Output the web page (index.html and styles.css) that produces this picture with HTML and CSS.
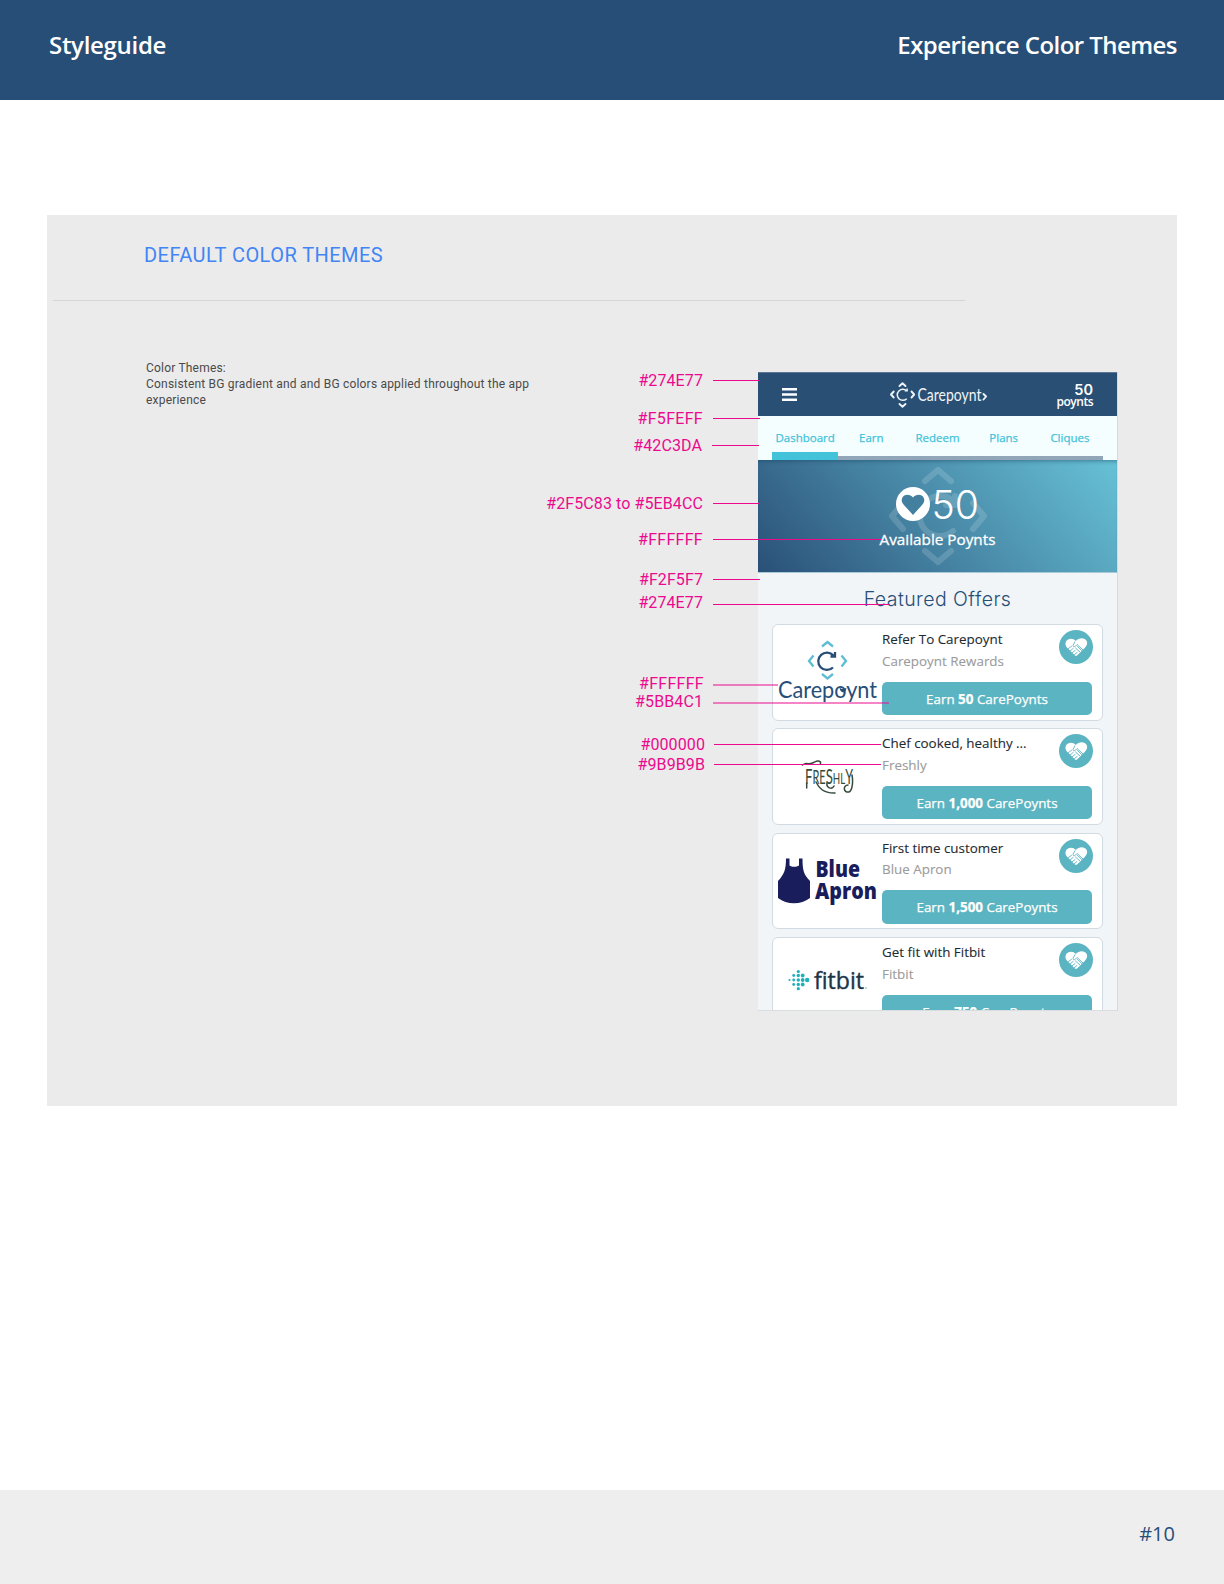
FILE: index.html
```html
<!DOCTYPE html>
<html lang="en">
<head>
<meta charset="utf-8">
<title>Styleguide - Experience Color Themes</title>
<link rel="stylesheet" href="styles.css">
</head>
<body>
<svg class="defs" width="0" height="0" aria-hidden="true">
  <symbol id="care" viewBox="0 0 34 34">
    <circle cx="17" cy="17" r="17" fill="#5bb4c1"/>
    <path d="M16.700 11C14.200 7.600 8.800 8 7 11.500c-1.500 3.200.3 5.700 2.400 7.500l5.200 5.200c.9.9 1.800 1.600 2.600 1.700 1 0 1.900-1.200 3-2.300l5.500-5.600c2-2 3.300-4.700 1.900-7.200-2-3.500-7.600-3.500-10.900.2z" fill="#fff"/>
    <path d="M9.500 18.500l3-2.200M11 21l3.200-2.600M13 23l3-2.500M15 25l3-2.500M15.800 11.800l-1.700 3.400c-.6 1.500 1.400 2 2.500.8l1.500-1.500 6.300 5.800M16.500 18l4.500 4M18.500 16.500l4.500 4.300" fill="none" stroke="#5bb4c1" stroke-width=".9" stroke-linecap="round"/>
  </symbol>
</svg>

<header class="page-header">
  <h1 class="page-title">Styleguide</h1>
  <h2 class="page-title page-title--section">Experience Color Themes</h2>
</header>

<main class="panel">
  <h3 class="panel-title">DEFAULT COLOR THEMES</h3>
  <div class="rule"></div>
  <div class="panel-body">
    <p class="description">Color Themes:<br>Consistent BG gradient and and BG colors applied throughout the app experience</p>

    <section class="phone">
      <div class="topbar">
        <svg class="burger" viewBox="0 0 15 13"><path d="M0 1.300h15M0 6.500h15M0 11.700h15" stroke="#fff" stroke-width="2.500"/></svg>
        <svg class="brand" viewBox="0 0 98 26">
          <path d="M9.500 4L12.500 1.200 15.500 4M9.500 22l3 2.700 3-2.700M3.700 9.500L1 12.500l2.700 3M21.500 9.500l2.700 3-2.700 3M93.500 12l2.600 2.500-2.600 3" fill="none" stroke="#eef4f8" stroke-width="1.900" stroke-linecap="round" stroke-linejoin="round"/>
          <path d="M16.700 9A5.500 5.500 0 1 0 16.700 16.700M14.700 8.700h2.400V6.500" fill="none" stroke="#eef4f8" stroke-width="1.500"/>
          <text x="27.500" y="19" class="brand-text" textLength="64" lengthAdjust="spacingAndGlyphs">Carepoynt</text>
        </svg>
        <div class="balance"><span class="balance-value">50</span><span class="balance-unit">poynts</span></div>
      </div>
      <nav class="tabs">
        <a class="tab tab--active">Dashboard</a><a class="tab">Earn</a><a class="tab">Redeem</a><a class="tab">Plans</a><a class="tab">Cliques</a>
      </nav>
      <div class="hero">
        <svg class="hero-mark" viewBox="0 0 98 98">
          <path d="M36 14L49 3l13 11M36 84l13 11 13-11M14 36L3 49l11 13M84 36l11 13-11 13M66 36A20 20 0 1 0 64 64M57 38h9V29" fill="none" stroke="#fff" stroke-width="6" stroke-linecap="round" stroke-linejoin="round"/>
        </svg>
        <div class="hero-amount">
          <svg class="heart" viewBox="0 0 34 34"><circle cx="17" cy="17" r="17" fill="#fff"/><path d="M17 10.500C14 6.700 8 6.900 6.200 10.900c-1.400 3.500.3 5.700 2.600 8L17 28l8.200-9.100c2.300-2.300 4-4.500 2.600-8C26 6.900 20 6.700 17 10.500z" fill="#437f9f"/></svg>
          <svg class="amount" viewBox="0 0 46 34"><text x="-1.500" y="31.500" textLength="47.500" lengthAdjust="spacingAndGlyphs" class="amount-text">50</text></svg>
        </div>
        <div class="hero-label">Available Poynts</div>
      </div>
      <h4 class="offers-title">Featured Offers</h4>
      <div class="offers">
        <article class="card">
          <svg class="logo" viewBox="0 0 100 95">
            <path d="M44 21.500L49.500 17l5.500 4.500M44 49l5.500 4.500L55 49M35.500 30.500L31 36l4.500 5.500M63.500 30.500L68 36l-4.500 5.500" fill="none" stroke="#5dbdd2" stroke-width="2.300"/>
            <path d="M55.500 30.500A8.700 8.700 0 1 0 55 42.500M52.500 31.500H57V27" fill="none" stroke="#274e77" stroke-width="2.300"/>
            <text x="0" y="73" class="logo-carepoynt" textLength="99" lengthAdjust="spacingAndGlyphs">Carepoynt</text>
            <path d="M61.500 62.500q3.500 3 7 0q-.3 4-3.500 5q-3.200-1-3.500-5z" fill="#274e77"/>
          </svg>
          <div class="info">
            <div class="offer-name">Refer To Carepoynt</div><div class="offer-brand">Carepoynt Rewards</div>
            <div class="earn">Earn <b>50</b> CarePoynts</div>
          </div>
          <svg class="care"><use href="#care"/></svg>
        </article>
        <article class="card">
          <svg class="logo" viewBox="0 0 100 95">
            <text transform="translate(27 54.500) scale(1 1.150)" class="logo-freshly" textLength="48" lengthAdjust="spacingAndGlyphs"><tspan font-size="19">F</tspan><tspan font-size="16">RE</tspan><tspan font-size="19">S</tspan><tspan font-size="14">HL</tspan><tspan font-size="18">Y</tspan></text>
            <path d="M24.500 36c4-3 6 0 10-2s6-3 8-1v2M28.700 54v5M38 53c3 6 7 11 18 11h1M49 54c-1 5 5 7 7 3M74 46c1 5 1 15-3 17-6 1-6-7-1-7" fill="none" stroke="#344b3b" stroke-width="1.500" stroke-linecap="round"/>
          </svg>
          <div class="info">
            <div class="offer-name">Chef cooked, healthy ...</div><div class="offer-brand">Freshly</div>
            <div class="earn">Earn <b>1,000</b> CarePoynts</div>
          </div>
          <svg class="care"><use href="#care"/></svg>
        </article>
        <article class="card">
          <svg class="logo" viewBox="0 0 100 95">
            <path d="M8 24.500h3.500v7c2 1.800 7 1.800 9.500 0v-7h3.500c0 11 1 16 7.500 22.500v17c-9 7-23 7-32 0V47c6-6.500 8-11 8-22.500z" fill="#191d5b"/>
            <text x="37.500" y="43" class="logo-apron" textLength="44.500" lengthAdjust="spacingAndGlyphs">Blue</text>
            <text x="37" y="64.500" class="logo-apron" textLength="62" lengthAdjust="spacingAndGlyphs">Apron</text>
          </svg>
          <div class="info">
            <div class="offer-name">First time customer</div><div class="offer-brand">Blue Apron</div>
            <div class="earn">Earn <b>1,500</b> CarePoynts</div>
          </div>
          <svg class="care"><use href="#care"/></svg>
        </article>
        <article class="card">
          <svg class="logo" viewBox="0 0 100 95">
            <g fill="#1fb0ba">
              <circle cx="11.500" cy="42" r="1.100"/><circle cx="15.700" cy="42" r="1.400"/><circle cx="20.300" cy="42" r="1.700"/><circle cx="24.700" cy="42" r="1.900"/><circle cx="29.200" cy="42" r="2.200"/>
              <circle cx="15.700" cy="37.500" r="1.400"/><circle cx="20.300" cy="37.500" r="1.700"/><circle cx="24.700" cy="37.500" r="1.900"/>
              <circle cx="15.700" cy="46.500" r="1.400"/><circle cx="20.300" cy="46.500" r="1.700"/><circle cx="24.700" cy="46.500" r="1.900"/>
              <circle cx="20.300" cy="33.500" r="1.600"/><circle cx="20.300" cy="50.700" r="1.600"/>
            </g>
            <text x="36" y="50.700" class="logo-fitbit" textLength="50" lengthAdjust="spacingAndGlyphs">fitbit</text>
            <circle cx="88" cy="50" r=".7" fill="#789"/>
          </svg>
          <div class="info">
            <div class="offer-name">Get fit with Fitbit</div><div class="offer-brand">Fitbit</div>
            <div class="earn">Earn <b>750</b> CarePoynts</div>
          </div>
          <svg class="care"><use href="#care"/></svg>
        </article>
      </div>
    </section>
  </div>

  <div class="callout c1"><span>#274E77</span><i></i></div>
  <div class="callout c2"><span>#F5FEFF</span><i></i></div>
  <div class="callout c3"><span>#42C3DA</span><i></i></div>
  <div class="callout c4"><span>#2F5C83 to #5EB4CC</span><i></i></div>
  <div class="callout c5"><span>#FFFFFF</span><i></i></div>
  <div class="callout c6"><span>#F2F5F7</span><i></i></div>
  <div class="callout c7"><span>#274E77</span><i></i></div>
  <div class="callout c8"><span>#FFFFFF</span><i></i></div>
  <div class="callout c9"><span>#5BB4C1</span><i></i></div>
  <div class="callout c10"><span>#000000</span><i></i></div>
  <div class="callout c11"><span>#9B9B9B</span><i></i></div>
</main>

<footer class="page-footer">#10</footer>
</body>
</html>
```
FILE: styles.css
```css
* { box-sizing: border-box; }

body {
  margin: 0;
  height: 1584px;
  display: flex;
  flex-direction: column;
  background: #fff;
  font-family: Roboto, sans-serif;
}

.defs { position: absolute; }

h1, h2, h3, h4, p { margin: 0; font-weight: 400; }

.page-header {
  height: 100px;
  padding: 28px 47px 0 49px;
  display: flex;
  justify-content: space-between;
  background: #274e77;
  color: #fff;
}

.page-title {
  font: 600 24px/34px "Open Sans", sans-serif;
  letter-spacing: -0.3px;
}
.page-title--section { letter-spacing: -0.55px; }

/* Grey sheet that holds the specimen */
.panel {
  position: relative;
  width: 1130px;
  height: 891px;
  margin: 115px 0 0 47px;
  background: #ebebeb;
}

.panel-title {
  padding: 28px 0 0 97px;
  height: 85px;
  font-size: 20px;
  line-height: 24px;
  letter-spacing: .45px;
  color: #4285f4;
}

.rule {
  width: 912px;
  height: 1px;
  margin-left: 6px;
  background: #d5d5d5;
}

.panel-body {
  display: flex;
  align-items: flex-start;
}

.description {
  width: 400px;
  margin: 59px 212px 0 99px;
  font-size: 12px;
  line-height: 16px;
  letter-spacing: .2px;
  color: #4a4a4a;
}

/* Phone specimen */
.phone {
  width: 360px;
  height: 639px;
  margin-top: 71px;
  overflow: hidden;
  background: #f1f5f8;
  border-right: 1px solid #d3dae0;
  border-bottom: 1px solid #d8dde0;
  font-family: "Open Sans", sans-serif;
}

.topbar {
  height: 44px;
  padding: 0 24px;
  display: flex;
  align-items: center;
  justify-content: space-between;
  background: #294f75;
  border-top: 1px solid #5b7793;
}

.burger { width: 15px; height: 13px; }
.brand { width: 98px; height: 26px; margin-left: 25px; overflow: visible; }
.brand-text { font: 17px Lato, sans-serif; fill: #eef4f8; }

.balance {
  display: flex;
  flex-direction: column;
  align-items: flex-end;
  color: #fff;
  font-weight: 600;
}
.balance-value { margin-top: 2px; font: 600 14.500px/12px Inter, sans-serif; }
.balance-unit { font-size: 12px; line-height: 11px; letter-spacing: -.5px; }

.tabs {
  height: 44px;
  padding: 0 14px;
  display: flex;
  background: #f5feff;
}
.tab {
  flex: 1;
  text-align: center;
  font-size: 11.500px;
  line-height: 44px;
  color: #42c3da;
  -webkit-text-stroke: .25px #42c3da;
  border-bottom: 4px solid #91a7b9;
}
.tab--active { box-shadow: inset 0 -4px #42c3da; border-color: #42c3da; }

.hero {
  position: relative;
  height: 113px;
  padding-top: 27px;
  display: flex;
  flex-direction: column;
  align-items: center;
  background: linear-gradient(48deg, #2a5077 0%, #4684a3 45%, #67c2d6 100%);
  box-shadow: inset 0 4px 4px -3px rgba(20, 60, 90, .5), inset 0 -1px #a9c8d8;
  color: #fff;
}
.hero-mark {
  position: absolute;
  left: 131px;
  top: 7px;
  width: 98px;
  height: 98px;
  opacity: .15;
}
.hero-amount { display: flex; gap: 3px; position: relative; }
.heart { width: 34px; height: 34px; }
.amount { width: 46px; height: 34px; overflow: visible; }
.amount-text { font: 300 39px Inter, sans-serif; fill: #fff; }
.hero-label {
  position: relative;
  margin-top: 7px;
  font-size: 15.300px;
  line-height: 22px;
  -webkit-text-stroke: .3px #fff;
}

.offers-title {
  height: 51px;
  padding-top: 12px;
  text-align: center;
  font: 300 19.500px/28px Inter, sans-serif;
  letter-spacing: .45px;
  color: #274e77;
}

.offers {
  padding: 0 14px;
  display: flex;
  flex-direction: column;
  gap: 7.800px;
}

.card {
  flex: none;
  display: flex;
  position: relative;
  width: 331px;
  height: 96.600px;
  padding-left: 5px;
  border: 1px solid #d2dae2;
  border-radius: 6px;
  background: #fff;
}
.logo { width: 100px; height: 95px; margin-right: 4px; overflow: visible; }
.info { width: 210px; }
.offer-name { padding-top: 4px; font-size: 13.400px; line-height: 20px; color: #1d2a30; -webkit-text-stroke: .1px #1d2a30; }
.offer-brand { padding-top: 1.500px; font-size: 13.400px; line-height: 20px; color: #9b9b9b; -webkit-text-stroke: .1px #9b9b9b; }
.earn {
  height: 33.500px;
  margin-top: 11px;
  border-radius: 5px;
  background: #5bb4c1;
  color: #fff;
  text-align: center;
  font-size: 13.400px;
  line-height: 34px;
  -webkit-text-stroke: .25px #fff;
}
.care { position: absolute; right: 9px; top: 5px; width: 34px; height: 34px; }

.logo-carepoynt { font: 24px Lato, sans-serif; fill: #274e77; }
.logo-freshly { font-family: Lato, sans-serif; font-weight: 400; fill: #344b3b; }
.logo-apron { font: 800 22px "Open Sans", sans-serif; fill: #191d5b; }
.logo-fitbit { font: 23px "Open Sans", sans-serif; fill: #1b3547; stroke: #1b3547; stroke-width: .4px; }

/* Callouts: colour value with its leader line, pinned over the specimen */
.callout {
  position: absolute;
  left: 456px;
  height: 20px;
  display: flex;
  align-items: center;
  color: #ec098d;
  font-size: 16px;
  line-height: 20px;
  letter-spacing: .1px;
}
.callout span { width: 200px; text-align: right; position: relative; top: 1px; }
.callout i { height: 1px; width: 47px; margin-left: 10px; background: #ec098d; }
.c1 { top: 155px; }
.c2 { top: 193px; }
.c3 { top: 220px; left: 455px; }
.c4 { top: 278px; }
.c5 { top: 314px; }
.c5 i { width: 168px; }
.c6 { top: 354px; }
.c7 { top: 377px; }
.c7 i { width: 177px; margin-top: 4px; }
.c8 { top: 458px; left: 457px; }
.c8 i, .c9 i { height: 2px; width: 65px; margin-top: 4px; margin-left: 9px; opacity: .5; }
.c9 { top: 476px; }
.c9 i { width: 176px; margin-left: 10px; }
.c10 { top: 519px; left: 458px; }
.c11 { top: 539px; left: 458px; }
.c10 i, .c11 i { width: 167px; margin-left: 9px; }
.c2 span, .c5 span, .c8 span { letter-spacing: .3px; }

.page-footer {
  height: 94px;
  margin-top: auto;
  padding: 30px 49px 0 0;
  background: #eee;
  text-align: right;
  font: 20px/28px "Open Sans", sans-serif;
  color: #274e77;
}
```
